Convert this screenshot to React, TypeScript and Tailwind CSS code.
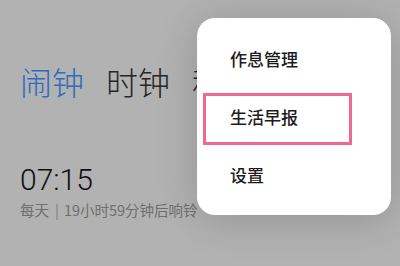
import React from "react";

export default function App() {
  return (
    <div
      className="relative w-[400px] h-[266px] overflow-hidden bg-[#b2b2b2]"
      style={{ fontFamily: '"Noto Sans CJK SC", sans-serif' }}
    >
      <div className="pl-[20px] pt-[62px]">
        <div className="flex gap-[22px] text-[32px] leading-[38px] font-light whitespace-nowrap">
          <span className="text-[#2f6cc0]">闹钟</span>
          <span className="text-[#262626]">时钟</span>
          <span className="text-[#262626]">秒表</span>
        </div>
        <div
          className="mt-[64px] text-[30px] leading-[32px] font-light text-[#0f0f0f]"
          style={{ fontFamily: 'Roboto, "Noto Sans CJK SC", sans-serif' }}
        >
          07:15
        </div>
        <div className="mt-[5px] flex items-center text-[14.5px] leading-[18px] text-[#6f6f6f] whitespace-nowrap">
          <span>每天</span>
          <span className="ml-[6px] mr-[5px] text-[#7a7a7a]">|</span>
          <span>19小时59分钟后响铃</span>
        </div>
      </div>

      <div className="absolute left-[197px] top-[18px] w-[194px] h-[197px] rounded-[18px] bg-white shadow-[0_4px_40px_rgba(0,0,0,0.18)]">
        <div className="pt-[12px] pl-[33px] text-[17px] font-medium text-[#1c1c1c]">
          <div className="h-[58px] flex items-center">作息管理</div>
          <div className="h-[58px] flex items-center">生活早报</div>
          <div className="h-[58px] flex items-center">设置</div>
        </div>
        <div className="absolute left-[6px] top-[75px] w-[149px] h-[52px] border-[3px] border-[#f0698f]" />
      </div>
    </div>
  );
}
